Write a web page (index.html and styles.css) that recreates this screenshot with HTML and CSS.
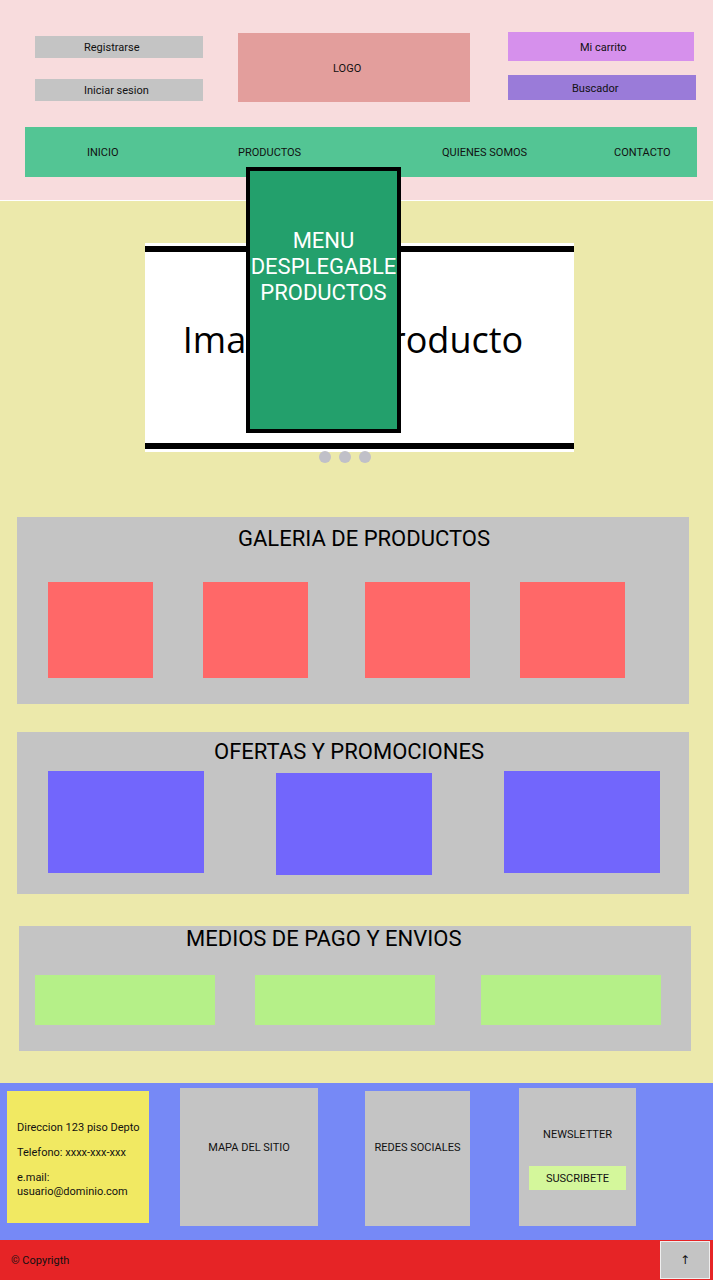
FILE: index.html
```html
<!DOCTYPE html>
<html lang="es">

<head>
    <meta charset="UTF-8" />
    <title>Tienda</title>
    <link rel="stylesheet" href="styles.css">
</head>

<body>

    <header class="cabecera">
        <div class="cabecera-top">
            <!-- Cuenta de usuario -->
            <div class="cuenta">
                <a class="btn-gris" href="#">Registrarse</a>
                <a class="btn-gris" href="#">Iniciar sesion</a>
            </div>

            <div class="logo">LOGO</div>

            <!-- Carrito y buscador -->
            <div class="acciones">
                <a class="carrito" href="#">Mi carrito</a>
                <a class="buscador" href="#">Buscador</a>
            </div>
        </div>

        <!-- Menu principal -->
        <nav class="menu">
            <a href="#">INICIO</a>
            <a href="#">PRODUCTOS</a>
            <a href="#">QUIENES SOMOS</a>
            <a href="#">CONTACTO</a>
        </nav>

        <div class="desplegable">MENU DESPLEGABLE PRODUCTOS</div>
    </header>

    <main class="contenido">

        <!-- Carrusel -->
        <div class="carrusel">
            <div class="carrusel-imagen">Imagen de producto</div>
        </div>
        <div class="puntos">
            <span></span>
            <span></span>
            <span></span>
        </div>

        <section class="galeria">
            <h2>GALERIA DE PRODUCTOS</h2>
            <div class="galeria-items">
                <div class="producto"></div>
                <div class="producto"></div>
                <div class="producto"></div>
                <div class="producto"></div>
            </div>
        </section>

        <section class="ofertas">
            <h2>OFERTAS Y PROMOCIONES</h2>
            <div class="ofertas-items">
                <div class="oferta"></div>
                <div class="oferta oferta-baja"></div>
                <div class="oferta"></div>
            </div>
        </section>

        <section class="medios">
            <h2>MEDIOS DE PAGO Y ENVIOS</h2>
            <div class="medios-items">
                <div class="medio"></div>
                <div class="medio medio-2"></div>
                <div class="medio medio-3"></div>
            </div>
        </section>

    </main>

    <footer class="pie">
        <div class="pie-cajas">
            <div class="caja-datos">
                <p>Direccion 123 piso Depto</p>
                <p>Telefono: xxxx-xxx-xxx</p>
                <p>e.mail:<br>usuario@dominio.com</p>
            </div>
            <div class="caja-mapa">MAPA DEL SITIO</div>
            <div class="caja-redes">REDES SOCIALES</div>
            <div class="caja-newsletter">
                <div>NEWSLETTER</div>
                <button class="suscribete">SUSCRIBETE</button>
            </div>
        </div>

        <div class="copyright">
            <span>© Copyrigth</span>
            <button class="subir">↑</button>
        </div>
    </footer>

</body>

</html>
```

FILE: styles.css
```css
body {
    margin: 0;
    width: 713px;
    font-family: Roboto, "Noto Sans", sans-serif;
    font-size: 11px;
    color: #111;
}

a {
    color: #111;
    text-decoration: none;
}

/* Cabecera */
.cabecera {
    position: relative;
    background-color: #f8dcdd;
    height: 200px;
    border-bottom: 1px solid #fff;
}

.cabecera-top {
    display: flex;
    align-items: flex-start;
    height: 70px;
    padding-top: 32px;
}

.cuenta {
    display: flex;
    flex-direction: column;
    gap: 21px;
    width: 168px;
    margin-left: 35px;
    margin-top: 4px;
}

.btn-gris {
    display: flex;
    align-items: center;
    height: 22px;
    padding-left: 49px;
    background-color: #c4c4c4;
}

.logo {
    display: flex;
    align-items: center;
    width: 137px;
    height: 67px;
    margin-left: 35px;
    margin-top: 1px;
    padding: 2px 0 0 95px;
    background-color: #e39e9c;
}

.acciones {
    display: flex;
    flex-direction: column;
    width: 188px;
    margin-left: 38px;
}

.carrito,
.buscador {
    display: flex;
    align-items: center;
}

.carrito {
    width: 114px;
    height: 28px;
    padding: 1px 0 0 72px;
    background-color: #d690ec;
}

.buscador {
    height: 23px;
    margin-top: 14px;
    padding: 2px 0 0 64px;
    background-color: #9a7bd9;
}

/* Menu principal */
.menu {
    display: grid;
    grid-template-columns: 151px 204px 172px auto;
    align-items: center;
    width: 610px;
    height: 49px;
    margin: 25px 0 0 25px;
    padding: 1px 0 0 62px;
    background-color: #53c594;
}

/* Menu desplegable sobre el contenido */
.desplegable {
    position: absolute;
    left: 246px;
    top: 167px;
    width: 147px;
    height: 201px;
    padding-top: 57px;
    border: 4px solid #000;
    background-color: #23a06c;
    color: #fff;
    font-size: 22px;
    line-height: 26px;
    text-align: center;
    z-index: 2;
}

/* Contenido */
.contenido {
    background-color: #ece9ab;
    padding: 42px 0 32px;
}

.carrusel {
    width: 429px;
    margin-left: 145px;
    padding: 3px 0;
    background-color: #fff;
}

.carrusel-imagen {
    display: flex;
    align-items: center;
    justify-content: center;
    height: 175px;
    padding: 0 13px 16px 0;
    border-top: 6px solid #000;
    border-bottom: 6px solid #000;
    font-family: "Open Sans", sans-serif;
    font-size: 36px;
    color: #000;
}

.puntos {
    display: flex;
    gap: 8px;
    margin: -1px 0 0 319px;
}

.puntos span {
    width: 12px;
    height: 12px;
    border-radius: 50%;
    background-color: #c0c0c8;
}

h2 {
    margin: 0;
    font-size: 22px;
    font-weight: normal;
    line-height: 26px;
    color: #000;
}

/* Galeria */
.galeria {
    width: 672px;
    margin: 54px 0 0 17px;
    padding: 9px 0 26px;
    background-color: #c4c4c4;
}

.galeria h2 {
    text-align: center;
    padding-left: 22px;
}

.galeria-items {
    display: flex;
    margin-top: 30px;
    padding-left: 31px;
}

.producto {
    width: 105px;
    height: 96px;
    background-color: #ff6868;
}

.producto + .producto {
    margin-left: 50px;
}

.producto:nth-child(3) {
    margin-left: 57px;
}

/* Ofertas */
.ofertas {
    width: 672px;
    margin: 28px 0 0 17px;
    padding: 7px 0 19px;
    background-color: #c4c4c4;
}

.ofertas h2 {
    text-align: center;
    padding-right: 8px;
}

.ofertas-items {
    display: flex;
    align-items: flex-start;
    gap: 72px;
    margin-top: 6px;
    padding-left: 31px;
}

.oferta {
    width: 156px;
    height: 102px;
    background-color: #7266fc;
}

.oferta-baja {
    margin-top: 2px;
}

/* Medios de pago */
.medios {
    width: 672px;
    margin: 32px 0 0 19px;
    padding: 0 0 26px;
    background-color: #c4c4c4;
}

.medios h2 {
    padding-left: 167px;
}

.medios-items {
    display: flex;
    margin-top: 23px;
    padding-left: 16px;
}

.medio {
    width: 180px;
    height: 50px;
    background-color: #b5f088;
}

.medio-2 {
    margin-left: 40px;
}

.medio-3 {
    margin-left: 46px;
}

/* Pie */
.pie-cajas {
    display: flex;
    align-items: flex-start;
    height: 152px;
    padding: 5px 0 0 7px;
    background-color: #7689f6;
}

.caja-datos {
    width: 132px;
    height: 102px;
    margin-top: 3px;
    padding: 30px 0 0 10px;
    background-color: #f1e962;
}

.caja-datos p {
    margin: 0 0 11px;
    line-height: 14px;
}

.caja-mapa,
.caja-redes,
.caja-newsletter {
    text-align: center;
    line-height: 14px;
    background-color: #c4c4c4;
}

.caja-mapa {
    width: 138px;
    height: 85px;
    margin-left: 31px;
    padding-top: 53px;
}

.caja-redes {
    width: 105px;
    height: 85px;
    margin: 3px 0 0 47px;
    padding-top: 50px;
}

.caja-newsletter {
    display: flex;
    flex-direction: column;
    align-items: center;
    width: 117px;
    height: 98px;
    margin-left: 49px;
    padding-top: 40px;
}

.suscribete {
    width: 97px;
    height: 24px;
    margin-top: 24px;
    border: none;
    padding: 0;
    background-color: #d4f79b;
    font-family: Roboto, sans-serif;
    font-size: 11px;
    color: #111;
}

.copyright {
    display: flex;
    justify-content: space-between;
    align-items: center;
    height: 40px;
    padding: 0 3px 0 11px;
    background-color: #e62426;
}

.subir {
    width: 50px;
    height: 38px;
    border: 1px solid #eee;
    padding: 0;
    background-color: #c4c4c4;
    font-family: "DejaVu Sans", sans-serif;
    font-size: 12px;
    color: #111;
}
```
